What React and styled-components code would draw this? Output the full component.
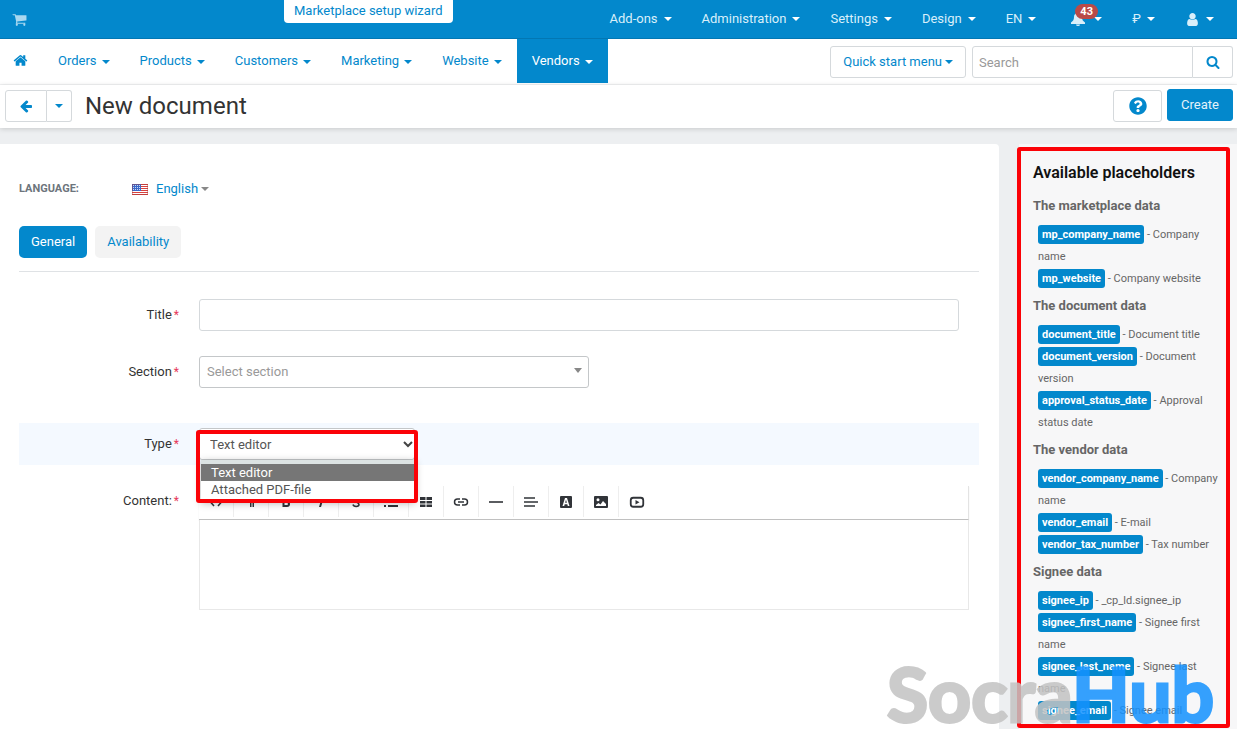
import styled, { createGlobalStyle, css } from 'styled-components';
import { FaQuestionCircle } from 'react-icons/fa';

const colors = {
  blue: '#0388cc',
  blueDark: '#0277b3',
  text: '#333',
  muted: '#666',
  border: '#d5d9dc',
  page: '#edeff1',
  red: '#fb0207',
};

const GlobalStyle = createGlobalStyle`
  * {
    box-sizing: border-box;
  }

  body {
    margin: 0;
    background: ${colors.page};
    color: ${colors.text};
    font-family: Roboto, 'Liberation Sans', sans-serif;
    font-size: 13px;
    line-height: 20px;
  }

  button, input, select, textarea {
    font: inherit;
    margin: 0;
  }

  a {
    color: ${colors.blue};
    text-decoration: none;
  }
`;

const topMenu = ['Add-ons', 'Administration', 'Settings', 'Design', 'EN'];

const mainMenu = ['Orders', 'Products', 'Customers', 'Marketing', 'Website', 'Vendors'];

const placeholders = [
  {
    title: 'The marketplace data',
    items: [
      ['mp_company_name', 'Company name'],
      ['mp_website', 'Company website'],
    ],
  },
  {
    title: 'The document data',
    items: [
      ['document_title', 'Document title'],
      ['document_version', 'Document version'],
      ['approval_status_date', 'Approval status date'],
    ],
  },
  {
    title: 'The vendor data',
    items: [
      ['vendor_company_name', 'Company name'],
      ['vendor_email', 'E-mail'],
      ['vendor_tax_number', 'Tax number'],
    ],
  },
  {
    title: 'Signee data',
    items: [
      ['signee_ip', '_cp_ld.signee_ip'],
      ['signee_first_name', 'Signee first name'],
      ['signee_last_name', 'Signee last name'],
      ['signee_email', 'Signee email'],
    ],
  },
];

const iconPaths = {
  cart: 'M704 1536q0 52-38 90t-90 38-90-38-38-90 38-90 90-38 90 38 38 90zm896 0q0 52-38 90t-90 38-90-38-38-90 38-90 90-38 90 38 38 90zm128-1088v512q0 24-16.5 42.5t-40.5 21.5l-1044 122q13 60 13 70 0 16-24 64h920q26 0 45 19t19 45-19 45-45 19h-1024q-26 0-45-19t-19-45q0-11 8-31.5t16-36 21.5-40 15.5-29.5l-177-823h-204q-26 0-45-19t-19-45 19-45 45-19h256q16 0 28.5 6.5t19.5 15.5 13 24.5 8 26 5.5 29.5 4.5 26h1201q26 0 45 19t19 45z',
  home: 'M1472 992v480q0 26-19 45t-45 19h-384v-384h-256v384h-384q-26 0-45-19t-19-45v-480q0-1 .5-3t.5-3l575-474 575 474q1 2 1 6zm223-69l-62 74q-8 9-21 11h-3q-13 0-21-7l-692-577-692 577q-12 8-24 7-13-2-21-11l-62-74q-8-10-7-23.5t11-21.5l719-599q32-26 76-26t76 26l244 204v-195q0-14 9-23t23-9h192q14 0 23 9t9 23v408l219 182q10 8 11 21.5t-7 23.5z',
  search: 'M1216 832q0-185-131.500-316.500t-316.500-131.500-316.500 131.500-131.500 316.500 131.500 316.500 316.500 131.500 316.500-131.500 131.500-316.500zm512 832q0 52-38 90t-90 38q-54 0-90-38l-343-342q-179 124-399 124-143 0-273.500-55.500t-225-150-150-225-55.500-273.500 55.500-273.500 150-225 225-150 273.500-55.500 273.500 55.500 225 150 150 225 55.500 273.500q0 220-124 399l343 343q37 37 37 90z',
  back: 'M1664 896v128q0 53-32.500 90.500t-84.500 37.500h-704l293 294q38 36 38 90t-38 90l-75 76q-37 37-90 37-52 0-91-37l-651-652q-37-37-37-90 0-52 37-91l651-650q38-38 91-38 52 0 90 38l75 74q38 38 38 91t-38 91l-293 293h704q52 0 84.500 37.500t32.500 90.500z',
  user: 'M1536 1399q0 109-62.500 187t-150.500 78h-854q-88 0-150.500-78t-62.500-187q0-85 8.500-160.500t31.500-152 58.500-131 94-89 134.500-34.500q131 128 313 128t313-128q76 0 134.500 34.500t94 89 58.500 131 31.500 152 8.500 160.500zm-256-887q0 159-112.500 271.500t-271.500 112.500-271.500-112.500-112.500-271.500 112.500-271.500 271.500-112.500 271.500 112.500 112.500 271.500z',
};

const Page = styled.div`
  position: relative;
  min-height: 100vh;
  display: flex;
  flex-direction: column;
  overflow: hidden;
`;

const Caret = styled.span`
  display: inline-block;
  flex: none;
  border-top: 4px solid ${({ $color }) => $color || 'currentColor'};
  border-left: 4px solid transparent;
  border-right: 4px solid transparent;
`;

const TopBar = styled.header`
  position: relative;
  display: flex;
  align-items: center;
  justify-content: space-between;
  height: 39px;
  padding: 0 8px 0 12px;
  background: ${colors.blue};
  border-bottom: 1px solid ${colors.blueDark};
`;

const CartLink = styled.a`
  display: flex;
  color: #a9d8f0;
`;

const SetupWizard = styled.a`
  position: absolute;
  top: 0;
  left: 284px;
  height: 23px;
  padding: 1px 10px;
  border-radius: 0 0 4px 4px;
  background: #fff;
`;

const Menu = styled.nav`
  display: flex;
`;

const TopItem = styled.a`
  position: relative;
  display: flex;
  align-items: center;
  gap: 6px;
  padding: 0 15px;
  color: #d9effa;

  svg {
    display: block;
  }

  ${Caret} {
    color: #fff;
  }
`;

const BellItem = styled(TopItem)`
  gap: 9px;
  padding-left: 20px;
`;

const Badge = styled.span`
  position: absolute;
  top: -5px;
  left: 24px;
  padding: 0 5px;
  border-radius: 8px;
  background: #b94a48;
  color: #fff;
  font-size: 11px;
  font-weight: 700;
  line-height: 15px;
`;

const NavBar = styled.div`
  display: flex;
  justify-content: space-between;
  align-items: flex-start;
  height: 46px;
  padding-right: 4px;
  background: #fff;
  border-bottom: 1px solid #f1f2f3;
`;

const NavItem = styled.a`
  display: flex;
  align-items: center;
  gap: 5px;
  height: 44px;
  padding: 0 15px;

  ${({ $active }) =>
    $active &&
    css`
      background: ${colors.blue};
      color: #fff;
    `}

  ${Caret} {
    margin-top: 2px;
  }
`;

const HomeItem = styled(NavItem)`
  padding: 0 15px 2px 13px;
`;

const NavTools = styled.div`
  display: flex;
  gap: 6px;
  padding-top: 7px;
`;

const Button = styled.button`
  display: flex;
  align-items: center;
  justify-content: center;
  gap: 3px;
  height: 32px;
  padding: 0 12px;
  border: 1px solid ${colors.border};
  border-radius: 3px;
  background: #fff;
  color: ${colors.blue};
  cursor: pointer;
`;

const SearchForm = styled.form`
  display: flex;
`;

const SearchInput = styled.input`
  width: 221px;
  height: 32px;
  padding: 0 6px;
  border: 1px solid ${colors.border};
  border-radius: 3px 0 0 3px;
  outline: none;

  &::placeholder {
    color: #999;
  }
`;

const SearchButton = styled(Button)`
  width: 40px;
  border-left: none;
  border-radius: 0 3px 3px 0;
`;

const ActionBar = styled.div`
  position: relative;
  display: flex;
  align-items: flex-start;
  height: 43px;
  padding: 4px 4px 0 5px;
  background: #fff;
  box-shadow: 0 1px 5px rgba(0, 0, 0, 0.16);
`;

const ButtonGroup = styled.div`
  display: flex;
  padding-top: 1px;
`;

const BackButton = styled(Button)`
  width: 42px;
  border-radius: 3px 0 0 3px;
`;

const BackMenuButton = styled(Button)`
  width: 25px;
  padding: 0;
  border-left: none;
  border-radius: 0 3px 3px 0;
`;

const PageTitle = styled.h1`
  flex: 1;
  margin: 0 0 0 13px;
  font-size: 24px;
  font-weight: 400;
  line-height: 34px;
`;

const HelpButton = styled(Button)`
  width: 49px;
  margin-right: 5px;
`;

const CreateButton = styled(Button)`
  width: 66px;
  border-color: ${colors.blue};
  background: ${colors.blue};
  color: #e3f3fb;
`;

const Content = styled.div`
  flex: 1;
  display: grid;
  grid-template-columns: minmax(0, 1fr) 218px;
  gap: 20px;
  padding-top: 16px;
`;

const Card = styled.main`
  padding: 35px 20px 20px 19px;
  border-radius: 0 4px 0 0;
  background: #fff;
`;

const LanguageRow = styled.div`
  display: flex;
  align-items: center;
`;

const LanguageLabel = styled.span`
  width: 113px;
  color: #6d757c;
  font-size: 11px;
  font-weight: 700;
`;

const LanguageLink = styled.a`
  display: flex;
  align-items: center;

  svg {
    margin-right: 8px;
  }

  ${Caret} {
    margin-left: 3px;
  }
`;

const Tabs = styled.div`
  display: flex;
  gap: 8px;
  margin-bottom: 27px;
  padding: 27px 0 13px;
  border-bottom: 1px solid #dfe2e5;
`;

const Tab = styled.button`
  height: 32px;
  padding: 0 12px;
  border: none;
  border-radius: 5px;
  background: ${({ $active }) => ($active ? colors.blue : '#f3f3f3')};
  color: ${({ $active }) => ($active ? '#fff' : colors.blue)};
  cursor: pointer;
`;

const Row = styled.div`
  display: grid;
  grid-template-columns: 160px minmax(0, 1fr);
  gap: 20px;
  padding-right: ${({ $right = 20 }) => $right}px;
  margin-bottom: 25px;
`;

const TypeRow = styled(Row)`
  margin: 35px 0 21px;
  padding: 5px 20px 5px 0;
  background: #f4f9ff;
`;

const Label = styled.label`
  padding-top: ${({ $top = 6 }) => $top}px;
  text-align: right;

  &::after {
    content: '*';
    margin-left: 2px;
    color: #e63a5a;
    font-size: 12px;
  }
`;

const TextInput = styled.input`
  width: 100%;
  height: 32px;
  padding: 0 8px;
  border: 1px solid ${colors.border};
  border-radius: 3px;
  outline: none;
`;

const SelectWrap = styled.div`
  position: relative;
  width: ${({ $width }) => $width}px;

  > svg {
    position: absolute;
    top: 13px;
    right: 2px;
    pointer-events: none;
  }

  > ${Caret} {
    position: absolute;
    top: 12px;
    right: 7px;
    border-top-width: 5px;
    pointer-events: none;
  }
`;

const Select = styled.select`
  display: block;
  width: 100%;
  height: 32px;
  padding: 0 7px;
  border: 1px solid #c4c7c9;
  border-radius: 3px;
  background: #fff;
  color: ${({ $muted }) => ($muted ? '#999' : '#555')};
  appearance: none;
  outline: none;
`;

const TypeSelect = styled(Select)`
  padding: 2px 10px 0;
`;

const OptionList = styled.ul`
  position: absolute;
  z-index: 1;
  top: 32px;
  left: 2px;
  right: 0;
  margin: 0;
  padding: 0 0 3px;
  list-style: none;
  background: #fff;
  border-top: 4px solid #dce3e3;
  box-shadow: 0 2px 8px rgba(0, 0, 0, 0.3);
`;

const Option = styled.li`
  padding: 0 10px;
  line-height: 17px;
  color: ${({ $active }) => ($active ? '#fff' : '#555')};
  background: ${({ $active }) => ($active ? '#767676' : '#fff')};
`;

const Frame = styled.div`
  position: absolute;
  z-index: 2;
  inset: ${({ $inset }) => $inset};
  border: 4px solid ${colors.red};
  border-radius: 3px;
  pointer-events: none;
`;

const Toolbar = styled.div`
  display: flex;
  height: 34px;
  padding-bottom: 2px;
  border-right: 1px solid #e3e3e3;
  border-bottom: 1px solid #c0c0c0;
  box-shadow: 0 1px 1px rgba(0, 0, 0, 0.1);
`;

const Tool = styled.button`
  display: flex;
  align-items: center;
  justify-content: center;
  width: 35px;
  padding: 0;
  border: none;
  border-right: ${({ $last }) => ($last ? 'none' : '1px solid #eee')};
  background: none;
  color: #313439;
  cursor: pointer;
`;

const Editor = styled.textarea`
  display: block;
  width: 100%;
  height: 90px;
  padding: 8px;
  border: 1px solid #e8e8e8;
  border-top: none;
  outline: none;
  resize: none;
`;

const Sidebar = styled.aside`
  position: relative;
  padding: 19px 14px 2px;
  background: #f7f7f8;
`;

const SidebarTitle = styled.h2`
  margin: 0 0 13px;
  color: #111;
  font-size: 16px;
  font-weight: 600;
  line-height: 20px;
`;

const GroupTitle = styled.h3`
  margin: 0 0 8px;
  color: ${colors.muted};
  font-size: 13px;
  font-weight: 700;
  line-height: 20px;
`;

const PlaceholderList = styled.ul`
  margin: 0 0 6px;
  padding: 0 0 0 5px;
  list-style: none;
  color: ${colors.muted};
  font-size: 11px;
  line-height: 22px;
`;

const Chip = styled.span`
  padding: 3px 4px;
  border-radius: 3px;
  background: ${colors.blue};
  color: #fff;
  font-weight: 700;
`;

const Watermark = styled.div`
  position: absolute;
  z-index: 3;
  right: 23px;
  bottom: 0;
  color: #c3c3c3;
  font-family: Lato, sans-serif;
  font-size: 75px;
  font-weight: 700;
  line-height: 74px;
  opacity: 0.85;
  pointer-events: none;
  -webkit-text-stroke: 3px currentColor;
  stroke-linejoin: round;

  span {
    color: #1492ff;
  }
`;

const Icon = ({ name, size = 14 }) => (
  <svg width={size} height={size} viewBox="0 0 1792 1792" fill="currentColor" aria-hidden="true">
    <path d={iconPaths[name]} />
  </svg>
);

const BellIcon = () => (
  <svg width="14" height="14" viewBox="0 0 14 14" fill="currentColor" aria-hidden="true">
    <path d="M7 0a1 1 0 0 1 1 1c2 .5 3 2 3 4 0 2.500.8 4 3 5.500V12H0v-1.500C2.200 9 3 7.500 3 5c0-2 1-3.500 3-4a1 1 0 0 1 1-1zM5 12.500h4a2 1.500 0 0 1-4 0z" />
  </svg>
);

const FlagIcon = () => (
  <svg width="16" height="11" viewBox="0 0 16 11" aria-hidden="true">
    <rect width="16" height="11" fill="#fff" />
    {[0, 2, 4, 6, 8, 10].map((y) => (
      <rect key={y} y={y} width="16" height="1" fill="#d8413f" />
    ))}
    <rect width="9" height="7" fill="#3a68c9" />
    {[1, 3, 5].map((y) =>
      [1, 3, 5, 7].map((x) => <rect key={`${x}-${y}`} x={x} y={y} width="1" height="1" fill="#c8d7f5" />)
    )}
    <rect x="0.5" y="0.5" width="15" height="10" fill="none" stroke="#a33a3a" strokeOpacity="0.4" />
  </svg>
);

const tools = [
  {
    label: 'HTML',
    icon: <path d="M6 4L2.500 8L6 12M10 4l3.500 4L10 12" fill="none" stroke="currentColor" strokeWidth="1.500" />,
  },
  {
    label: 'Format',
    icon: <path d="M6.500 3H12v1.500h-1V13H9.500V4.500H8.500V13H7V9a3 3 0 0 1-.5-6z" />,
  },
  {
    label: 'Bold',
    icon: (
      <path d="M5.500 4H8.500a2 2 0 0 1 0 4H5.500zM5.500 8h3.500a2 2 0 0 1 0 4H5.500z" fill="none" stroke="currentColor" strokeWidth="2" />
    ),
  },
  { label: 'Italic', icon: <path d="M9 3h2L8 13H6z" /> },
  {
    label: 'Deleted',
    icon: (
      <path d="M11 5.500C10.500 3.500 6 3 6 5.500S11 8 11 10.500 5.500 13 5 10.500" fill="none" stroke="currentColor" strokeWidth="1.500" />
    ),
  },
  {
    label: 'Lists',
    icon: <path d="M1 3h2v2H1zM5 3h10v2H5zM1 7h2v2H1zM5 7h10v2H5zM1 11h2v2H1zM5 11h10v2H5z" />,
  },
  {
    label: 'Table',
    icon: <path d="M2 3h5.500v3H2zM8.500 3H14v3H8.500zM2 7h5.500v2.500H2zM8.500 7H14v2.500H8.500zM2 10.500h5.500V13H2zM8.500 10.500H14V13H8.500z" />,
  },
  {
    label: 'Link',
    icon: (
      <path d="M7 5H4.500a3 3 0 0 0 0 6H7M9 5h2.500a3 3 0 0 1 0 6H9M5 8h6" fill="none" stroke="currentColor" strokeWidth="1.500" />
    ),
  },
  { label: 'Line', icon: <path d="M1 7.200h14v1.600H1z" /> },
  { label: 'Alignment', icon: <path d="M1 3.200h11v1.600H1zM1 7.200h14v1.600H1zM1 11.200h11v1.600H1z" /> },
  {
    label: 'Text color',
    icon: (
      <path
        fillRule="evenodd"
        d="M3 2h10a1 1 0 0 1 1 1v10a1 1 0 0 1-1 1H3a1 1 0 0 1-1-1V3a1 1 0 0 1 1-1zM7 4L4.500 12h1.700l.5-1.800h2.600l.5 1.800h1.700L9 4zM8 5.800L8.900 8.800H7.100z"
      />
    ),
  },
  {
    label: 'Image',
    icon: (
      <path
        fillRule="evenodd"
        d="M2 2h12a1 1 0 0 1 1 1v10a1 1 0 0 1-1 1H2a1 1 0 0 1-1-1V3a1 1 0 0 1 1-1zM5 4.200a1.500 1.500 0 1 0 0 3 1.500 1.500 0 0 0 0-3zM3 12h10V10L10 7 7.500 10.500 5.500 9 3 11z"
      />
    ),
  },
  {
    label: 'Video',
    icon: (
      <>
        <rect x="1.750" y="3.750" width="12.500" height="9" rx="2.500" fill="none" stroke="currentColor" strokeWidth="1.800" />
        <path d="M6.500 6L10.500 8.250L6.500 10.500z" />
      </>
    ),
  },
];

const Header = () => (
  <>
    <TopBar>
      <CartLink href="#storefront" aria-label="Storefront">
        <Icon name="cart" size={15} />
      </CartLink>
      <SetupWizard href="#wizard">Marketplace setup wizard</SetupWizard>
      <Menu>
        {topMenu.map((item) => (
          <TopItem key={item} href="#menu">
            {item}
            <Caret />
          </TopItem>
        ))}
        <BellItem href="#notifications" aria-label="Notifications">
          <BellIcon />
          <Badge>43</Badge>
          <Caret />
        </BellItem>
        <TopItem href="#currency">
          ₽
          <Caret />
        </TopItem>
        <TopItem href="#account" aria-label="Account">
          <Icon name="user" size={15} />
          <Caret />
        </TopItem>
      </Menu>
    </TopBar>
    <NavBar>
      <Menu>
        <HomeItem href="#home" aria-label="Home">
          <Icon name="home" size={15} />
        </HomeItem>
        {mainMenu.map((item) => (
          <NavItem key={item} href="#section" $active={item === 'Vendors'}>
            {item}
            <Caret />
          </NavItem>
        ))}
      </Menu>
      <NavTools>
        <Button type="button">
          Quick start menu
          <Caret />
        </Button>
        <SearchForm>
          <SearchInput type="text" placeholder="Search" aria-label="Search" />
          <SearchButton type="button" aria-label="Find">
            <Icon name="search" size={14} />
          </SearchButton>
        </SearchForm>
      </NavTools>
    </NavBar>
    <ActionBar>
      <ButtonGroup>
        <BackButton type="button" aria-label="Back">
          <Icon name="back" size={14} />
        </BackButton>
        <BackMenuButton type="button" aria-label="History">
          <Caret />
        </BackMenuButton>
      </ButtonGroup>
      <PageTitle>New document</PageTitle>
      <ButtonGroup>
        <HelpButton type="button" aria-label="Help">
          <FaQuestionCircle size={18} />
        </HelpButton>
      </ButtonGroup>
      <CreateButton type="submit">Create</CreateButton>
    </ActionBar>
  </>
);

const DocumentForm = () => (
  <Card>
    <LanguageRow>
      <LanguageLabel>LANGUAGE:</LanguageLabel>
      <LanguageLink href="#language">
        <FlagIcon />
        English
        <Caret $color="#888" />
      </LanguageLink>
    </LanguageRow>
    <Tabs>
      <Tab type="button" $active>
        General
      </Tab>
      <Tab type="button">Availability</Tab>
    </Tabs>
    <Row>
      <Label htmlFor="title">Title</Label>
      <TextInput id="title" type="text" />
    </Row>
    <Row>
      <Label htmlFor="section">Section</Label>
      <SelectWrap $width={390}>
        <Select id="section" $muted>
          <option>Select section</option>
        </Select>
        <Caret $color="#888" />
      </SelectWrap>
    </Row>
    <TypeRow>
      <Label htmlFor="type">Type</Label>
      <SelectWrap $width={216}>
        <TypeSelect id="type">
          <option>Text editor</option>
          <option>Attached PDF-file</option>
        </TypeSelect>
        <svg width="10" height="7" viewBox="0 0 10 7" fill="none" stroke="#444" strokeWidth="2">
          <path d="M1 1l4 4 4-4" />
        </svg>
        <OptionList>
          <Option $active>Text editor</Option>
          <Option>Attached PDF-file</Option>
        </OptionList>
        <Frame $inset="2px -3px -43px -3px" />
      </SelectWrap>
    </TypeRow>
    <Row $right={10}>
      <Label htmlFor="content" $top={5}>
        Content:
      </Label>
      <div>
        <Toolbar>
          {tools.map(({ label, icon }, i) => (
            <Tool key={label} type="button" aria-label={label} $last={i === tools.length - 1}>
              <svg width="16" height="16" viewBox="0 0 16 16" fill="currentColor">
                {icon}
              </svg>
            </Tool>
          ))}
        </Toolbar>
        <Editor id="content" />
      </div>
    </Row>
  </Card>
);

const Placeholders = () => (
  <Sidebar>
    <SidebarTitle>Available placeholders</SidebarTitle>
    {placeholders.map(({ title, items }) => (
      <section key={title}>
        <GroupTitle>{title}</GroupTitle>
        <PlaceholderList>
          {items.map(([name, description]) => (
            <li key={name}>
              <Chip>{name}</Chip> - {description}
            </li>
          ))}
        </PlaceholderList>
      </section>
    ))}
    <Frame $inset="3px 7px 2px -2px" />
  </Sidebar>
);

const App = () => {
  return (
    <Page>
      <GlobalStyle />
      <Header />
      <Content>
        <DocumentForm />
        <Placeholders />
      </Content>
      <Watermark>
        Socra<span>Hub</span>
      </Watermark>
    </Page>
  );
};

export default App;
